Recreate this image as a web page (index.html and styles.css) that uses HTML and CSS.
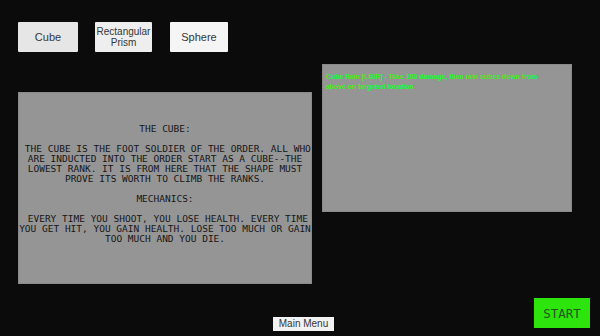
FILE: index.html
```html
<!DOCTYPE html>
<html>
<head>
	<title>Choose Your Shape</title>
	<link rel="stylesheet" href="styles.css">
</head>
<body>
<div class="screen">
  <div class="shapes">
    <button class="shape cube">Cube</button>
    <button class="shape prism">Rectangular<br>Prism</button>
    <button class="shape sphere">Sphere</button>
  </div>

  <div class="panels">
    <div class="lore"><div class="lore-text">THE CUBE:

 THE CUBE IS THE FOOT SOLDIER OF THE ORDER. ALL WHO
ARE INDUCTED INTO THE ORDER START AS A CUBE--THE
LOWEST RANK. IT IS FROM HERE THAT THE SHAPE MUST
PROVE ITS WORTH TO CLIMB THE RANKS.

MECHANICS:

 EVERY TIME YOU SHOOT, YOU LOSE HEALTH. EVERY TIME
YOU GET HIT, YOU GAIN HEALTH. LOSE TOO MUCH OR GAIN
TOO MUCH AND YOU DIE.</div></div>
    <div class="ability">
      <p>Cube Rain [LB/R] - Take 100 damage, then rain cubes down from above on targeted location</p>
    </div>
  </div>

  <div class="footer">
    <button class="menu">Main Menu</button>
    <button class="start">START</button>
  </div>
</div>
</body>
</html>
```

FILE: styles.css
```css
body {
    margin: 0;
    background: #0b0b0b;
}

.screen {
    width: 600px;
    height: 336px;
    display: flex;
    flex-direction: column;
}

button {
    border: 0;
    padding: 0;
    cursor: pointer;
    font-family: "Liberation Sans", Arial, sans-serif;
    color: #363636;
}

.shapes {
    display: flex;
    gap: 17px;
    padding: 22px 0 0 18px;
    height: 30px;
}

.shape {
    height: 30px;
    font-size: 11px;
    line-height: 11px;
    border-radius: 1px;
}
.cube { width: 60px; background: #e6e6e6; }
.prism { width: 57px; background: #eeeeee; font-size: 10px; }
.sphere { width: 58px; background: #f5f5f5; margin-left: 1px; }

.panels {
    display: flex;
    align-items: flex-start;
    height: 232px;
}

.lore {
    margin: 40px 0 0 18px;
    width: 292px;
    height: 190px;
    background: #959595;
    border: 1px solid #8a8a8a;
}

.lore-text {
    white-space: pre;
    text-align: center;
    font: 9.5px/10px "DejaVu Sans Mono", monospace;
    color: #151515;
    padding-top: 31px;
}

.ability {
    margin: 12px 0 0 10px;
    width: 248px;
    height: 146px;
    background: #959595;
    border: 1px solid #8a8a8a;
}

.ability p {
    margin: 0;
    padding: 7px 12px 0 3px;
    font: bold 6.9px/10px "Liberation Sans", Arial, sans-serif;
    color: #2af52a;
}

.footer {
    flex: 1;
    display: flex;
    align-items: flex-end;
    padding-left: 273px;
}

.menu {
    width: 61px;
    height: 14px;
    margin-bottom: 5px;
    background: #f2f2f2;
    font-size: 10px;
    line-height: 14px;
}

.start {
    margin: 0 10px 8px auto;
    width: 56px;
    height: 30px;
    background: #2de40c;
    color: #24561a;
    font: 12.5px "DejaVu Sans Mono", monospace;
}
```
